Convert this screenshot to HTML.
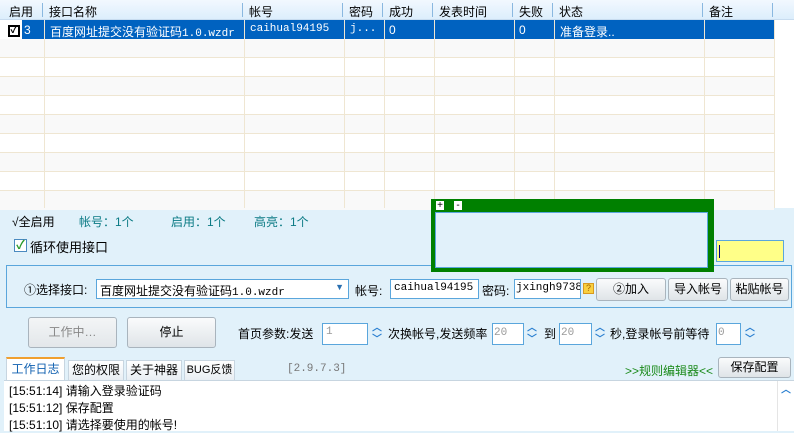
<!DOCTYPE html>
<html><head><meta charset="utf-8"><style>
*{margin:0;padding:0;box-sizing:border-box}
body{width:794px;height:431px;overflow:hidden;background:#e1f1fa;font-family:"Liberation Sans","Noto Sans CJK SC","WenQuanYi Zen Hei",sans-serif;font-size:12px;color:#000;position:relative}
.a{position:absolute;white-space:nowrap}
#grid{position:absolute;left:0;top:0;width:794px;height:208px;background:#fff}
.hdr{position:absolute;top:0;left:0;width:794px;height:20px;background:linear-gradient(#f2f8fe,#dceefc);border-bottom:1px solid #c8dcef}
.hs{position:absolute;top:3px;width:1px;height:14px;background:#8ab8e0}
.row{position:absolute;left:0;width:774px;height:19px;border-bottom:1px solid #efe6d2}
.vl{position:absolute;top:20px;width:1px;height:188px;background:#efe6d2}
.inp{position:absolute;background:#fff;border:1px solid #5aa6dc;height:20px;font-family:"Liberation Mono","Noto Sans CJK SC",monospace;font-size:12px;padding:2px 3px;overflow:hidden}
.btn{position:absolute;border:1px solid #a9b4bd;border-radius:3px;background:linear-gradient(#fafbfc,#dfe4e8);text-align:center;font-size:12px}
.sp{position:absolute;width:12px;height:22px;color:#2a7fd0;font-size:10px;line-height:11px;text-align:center;font-weight:bold}
.tab{position:absolute;top:360px;height:20px;border:1px solid #c7d5e0;border-bottom:none;background:linear-gradient(#fff,#e8eef3);text-align:center;font-size:12px;line-height:18px}
</style></head><body>
<div id="grid">
 <div class="hdr"></div>
 <div class="hs" style="left:42px"></div><div class="hs" style="left:242px"></div><div class="hs" style="left:342px"></div><div class="hs" style="left:382px"></div><div class="hs" style="left:432px"></div><div class="hs" style="left:512px"></div><div class="hs" style="left:552px"></div><div class="hs" style="left:702px"></div><div class="hs" style="left:772px"></div>
 <div class="a" style="left:9px;top:3px">启用</div>
 <div class="a" style="left:49px;top:3px">接口名称</div>
 <div class="a" style="left:249px;top:3px">帐号</div>
 <div class="a" style="left:349px;top:3px">密码</div>
 <div class="a" style="left:389px;top:3px">成功</div>
 <div class="a" style="left:439px;top:3px">发表时间</div>
 <div class="a" style="left:519px;top:3px">失败</div>
 <div class="a" style="left:559px;top:3px">状态</div>
 <div class="a" style="left:709px;top:3px">备注</div>
 <div class="row" style="top:20px;background:#0062c0;border-color:#0062c0"></div>
 <div class="row" style="top:39px;background:#f9f9f9"></div>
 <div class="row" style="top:58px"></div>
 <div class="row" style="top:77px;background:#f9f9f9"></div>
 <div class="row" style="top:96px"></div>
 <div class="row" style="top:115px;background:#f9f9f9"></div>
 <div class="row" style="top:134px"></div>
 <div class="row" style="top:153px;background:#f9f9f9"></div>
 <div class="row" style="top:172px"></div>
 <div class="row" style="top:191px;background:#f9f9f9;border:none"></div>
 <div class="vl" style="left:44px"></div><div class="vl" style="left:244px"></div><div class="vl" style="left:344px"></div><div class="vl" style="left:384px"></div><div class="vl" style="left:434px"></div><div class="vl" style="left:514px"></div><div class="vl" style="left:554px"></div><div class="vl" style="left:704px"></div><div class="vl" style="left:774px"></div>
 <div class="a" style="left:0;top:20px;width:22px;height:19px;background:#fff"></div>
 <div class="a" style="left:8px;top:25px;width:12px;height:12px;border:2px solid #000;background:#fff;font-size:10px;line-height:8px;font-weight:bold;text-align:center">✓</div>
 <div class="a" style="left:24px;top:23px;color:#fff">3</div>
 <div class="a" style="left:50px;top:23px;color:#fff">百度网址提交没有验证码<span style="font-family:'Liberation Mono',monospace;font-size:11px">1.0.wzdr</span></div>
 <div class="a" style="left:250px;top:23px;color:#fff;font-family:'Liberation Mono',monospace;font-size:11px">caihual94195</div>
 <div class="a" style="left:350px;top:23px;color:#fff;font-family:'Liberation Mono',monospace;font-size:11px">j...</div>
 <div class="a" style="left:389px;top:23px;color:#fff">0</div>
 <div class="a" style="left:519px;top:23px;color:#fff">0</div>
 <div class="a" style="left:560px;top:23px;color:#fff">准备登录..</div>
</div>
<div class="a" style="left:12px;top:213px">√全启用</div>
<div class="a" style="left:79px;top:213px;color:#0a7a84">帐号：1个</div>
<div class="a" style="left:171px;top:213px;color:#0a7a84">启用：1个</div>
<div class="a" style="left:254px;top:213px;color:#0a7a84">高亮：1个</div>
<div class="a" style="left:14px;top:239px;width:13px;height:13px;border:1px solid #4a8ac0;background:#fff;color:#2a9a2a;font-size:12px;line-height:11px;text-align:center;font-weight:bold">✓</div>
<div class="a" style="left:30px;top:237px;font-size:13px">循环使用接口</div>
<div class="a" style="left:6px;top:265px;width:786px;height:43px;border:1px solid #5aa6dc"></div>
<div class="a" style="left:24px;top:281px;font-size:12px">①选择接口:</div>
<div class="inp" style="left:96px;top:279px;width:253px;font-family:'Liberation Sans','Noto Sans CJK SC',sans-serif;font-size:12px;padding:2px 3px">百度网址提交没有验证码<span style="font-family:'Liberation Mono',monospace;font-size:11px">1.0.wzdr</span><span style="position:absolute;right:4px;top:2px;color:#2a6fb0;font-size:9px">▼</span></div>
<div class="a" style="left:355px;top:282px;font-size:12px">帐号:</div>
<div class="inp" style="left:390px;top:279px;width:89px;font-size:11px">caihual94195</div>
<div class="a" style="left:482px;top:282px;font-size:12px">密码:</div>
<div class="inp" style="left:514px;top:279px;width:67px;padding:2px 1px;font-size:11px">jxingh9738</div>
<div class="a" style="left:583px;top:283px;width:11px;height:11px;border:1px solid #d89a20;background:#f8d040;font-size:9px;line-height:9px;text-align:center;color:#a06000">?</div>
<div class="btn" style="left:596px;top:278px;width:70px;height:23px;line-height:21px">②加入</div>
<div class="btn" style="left:668px;top:278px;width:60px;height:23px;line-height:21px">导入帐号</div>
<div class="btn" style="left:730px;top:278px;width:59px;height:23px;line-height:21px">粘贴帐号</div>
<div class="a" style="left:431px;top:199px;width:283px;height:73px;background:#008000"></div>
<div class="a" style="left:436px;top:201px;width:8px;height:9px;background:#fff;font-size:10px;line-height:9px;text-align:center">+</div>
<div class="a" style="left:454px;top:201px;width:8px;height:9px;background:#fff;font-size:10px;line-height:9px;text-align:center">-</div>
<div class="a" style="left:435px;top:212px;width:273px;height:56px;background:#e1f1fa;border:1px solid #5aa6dc"></div>
<div class="a" style="left:716px;top:240px;width:68px;height:22px;background:#ffff88;border:1px solid #5aa6dc"><div style="position:absolute;left:2px;top:4px;width:1px;height:13px;background:#000080"></div></div>
<div class="btn" style="left:28px;top:317px;width:89px;height:31px;line-height:29px;color:#888;background:linear-gradient(#f3f5f6,#e3e7ea)">工作中…</div>
<div class="btn" style="left:127px;top:317px;width:89px;height:31px;line-height:29px">停止</div>
<div class="a" style="left:238px;top:325px">首页参数:发送</div>
<div class="inp" style="left:322px;top:323px;width:46px;height:22px;color:#999;font-size:11px">1</div>
<div class="sp" style="left:371px;top:323px">︿<br>﹀</div>
<div class="a" style="left:388px;top:325px">次换帐号,发送频率</div>
<div class="inp" style="left:492px;top:323px;width:32px;height:22px;color:#999;font-size:11px;padding:3px 1px">20</div>
<div class="sp" style="left:526px;top:323px">︿<br>﹀</div>
<div class="a" style="left:544px;top:325px">到</div>
<div class="inp" style="left:559px;top:323px;width:33px;height:22px;color:#999;font-size:11px;padding:3px 1px">20</div>
<div class="sp" style="left:594px;top:323px">︿<br>﹀</div>
<div class="a" style="left:610px;top:325px">秒,登录帐号前等待</div>
<div class="inp" style="left:716px;top:323px;width:25px;height:22px;color:#999;font-size:11px;padding:3px 1px">0</div>
<div class="sp" style="left:744px;top:323px">︿<br>﹀</div>
<div class="tab" style="left:6px;top:357px;width:59px;height:24px;background:#fff;color:#1060b0;border-top:2px solid #f0a030;line-height:20px">工作日志</div>
<div class="tab" style="left:68px;width:56px">您的权限</div>
<div class="tab" style="left:126px;width:56px">关于神器</div>
<div class="tab" style="left:184px;width:51px;font-size:11px">BUG反馈</div>
<div class="a" style="left:287px;top:363px;color:#777;font-family:'Liberation Mono',monospace;font-size:11px">[2.9.7.3]</div>
<div class="a" style="left:625px;top:362px;color:#1a8a1a">&gt;&gt;规则编辑器&lt;&lt;</div>
<div class="btn" style="left:718px;top:357px;width:73px;height:21px;line-height:19px">保存配置</div>
<div class="a" style="left:4px;top:380px;width:790px;height:51px;background:#fff;border-top:1px solid #c7d5e0"></div>
<div class="a" style="left:777px;top:381px;width:17px;height:50px;background:#fff;border-left:1px solid #e5e5e5;color:#2a7fd0;font-size:10px;text-align:center;font-weight:bold">︿</div>
<div class="a" style="left:9px;top:382px">[15:51:14] 请输入登录验证码</div>
<div class="a" style="left:9px;top:399px">[15:51:12] 保存配置</div>
<div class="a" style="left:9px;top:416px">[15:51:10] 请选择要使用的帐号!</div>
</body></html>
